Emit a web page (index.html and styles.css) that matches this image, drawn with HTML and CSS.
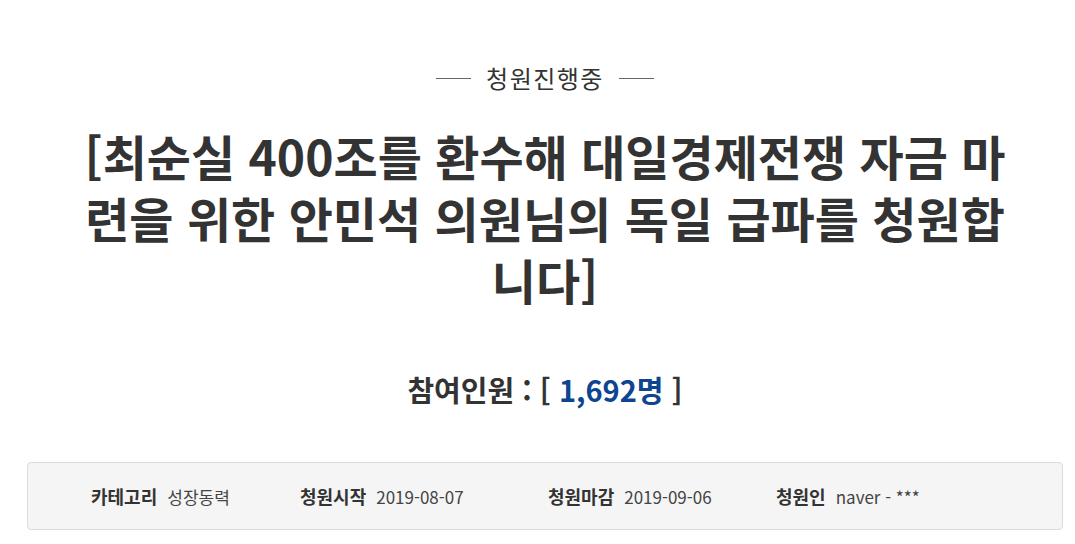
FILE: index.html
```html
<!DOCTYPE html>
<html lang="ko">
<head>
<meta charset="utf-8">
<title>청원진행중</title>
<link rel="stylesheet" href="styles.css">
</head>
<body>
<div class="page">
  <div class="status"><span class="status-line"></span><span class="status-text">청원진행중</span><span class="status-line"></span></div>
  <h1 class="title">[최순실 400조를 환수해 대일경제전쟁 자금 마련을 위한 안민석 의원님의 독일 급파를 청원합니다]</h1>
  <h2 class="count">참여인원 : [ <span class="count-num">1,692명</span> ]</h2>
  <ul class="info">
    <li class="info-item"><strong class="info-label">카테고리</strong><span class="info-value">성장동력</span></li>
    <li class="info-item"><strong class="info-label">청원시작</strong><span class="info-value">2019-08-07</span></li>
    <li class="info-item"><strong class="info-label">청원마감</strong><span class="info-value">2019-09-06</span></li>
    <li class="info-item"><strong class="info-label">청원인</strong><span class="info-value">naver - ***</span></li>
  </ul>
</div>
</body>
</html>
```

FILE: styles.css
```css
* { box-sizing: border-box; }
body {
  margin: 0;
  background: #fff;
  font-family: "Noto Sans CJK KR", "Noto Sans", sans-serif;
  color: #333;
}
.page {
  width: 1036px;
  margin-left: 27px;
  padding-top: 61px;
}
.status {
  display: flex;
  justify-content: center;
  align-items: center;
  gap: 15px;
  height: 34px;
}
.status-line {
  display: block;
  width: 35px;
  height: 1px;
  background: #666;
}
.status-text {
  font-size: 24px;
  line-height: 34px;
  letter-spacing: 1.5px;
  color: #333;
}
.title {
  margin: 29px 0 0;
  padding: 0 48px;
  font-size: 48px;
  line-height: 62px;
  font-weight: 700;
  text-align: center;
  color: #333;
}
.count {
  margin: 59px 0 0;
  font-size: 29px;
  line-height: 40px;
  font-weight: 700;
  text-align: center;
  color: #333;
}
.count-num { color: #0d4590; }
.info {
  list-style: none;
  margin: 53px 0 0;
  padding: 0 0 0 63px;
  height: 68px;
  display: grid;
  grid-template-columns: 209px 248px 228px auto;
  align-items: center;
  background: #f5f5f5;
  border: 1px solid #dcdcdc;
  border-radius: 4px;
}
.info-item {
  white-space: nowrap;
  line-height: 26px;
}
.info-label {
  font-size: 18px;
  font-weight: 700;
  color: #333;
  margin-right: 10px;
}
.info-value {
  font-size: 17px;
  color: #444;
}
```
